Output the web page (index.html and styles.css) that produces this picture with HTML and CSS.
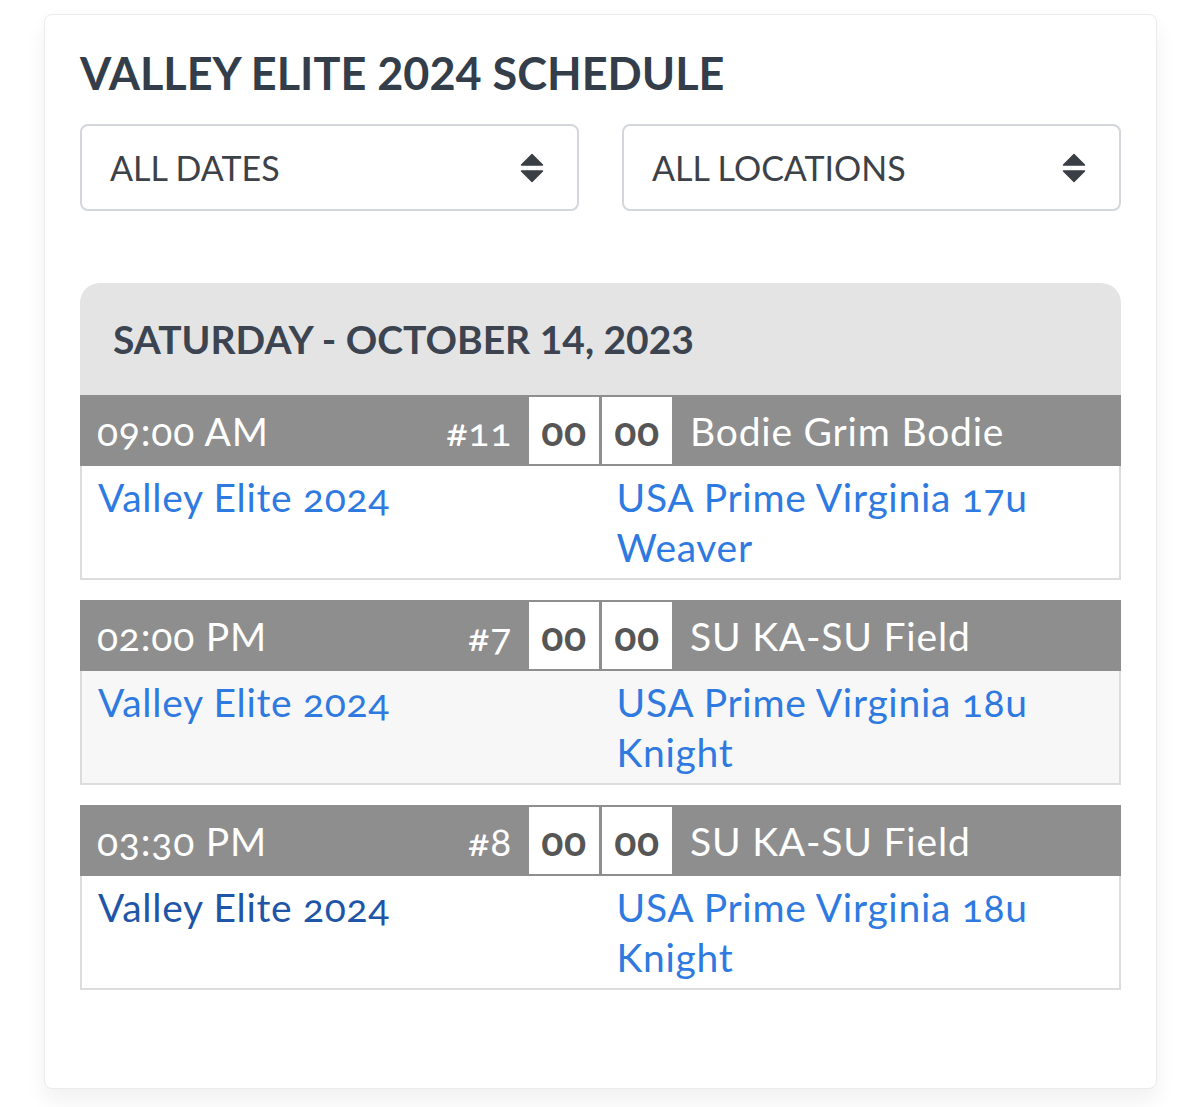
FILE: index.html
```html
<!DOCTYPE html>
<html lang="en">
<head>
<meta charset="utf-8">
<title>Valley Elite 2024 Schedule</title>
<link rel="stylesheet" href="styles.css">
</head>
<body>
<div class="page">
  <div class="card">
    <h1 class="title">VALLEY ELITE 2024 SCHEDULE</h1>
    <div class="filters">
      <div class="select">
        <span>ALL DATES</span>
        <svg class="sort" viewBox="0 0 24 30" aria-hidden="true"><polygon points="12,1.5 22.5,12 1.5,12"/><polygon points="1.5,18 22.5,18 12,28.5"/></svg>
      </div>
      <div class="select">
        <span>ALL LOCATIONS</span>
        <svg class="sort" viewBox="0 0 24 30" aria-hidden="true"><polygon points="12,1.5 22.5,12 1.5,12"/><polygon points="1.5,18 22.5,18 12,28.5"/></svg>
      </div>
    </div>

    <div class="day">
      <div class="day-head">SATURDAY - OCTOBER 14, 2023</div>

      <div class="game">
        <div class="bar">
          <div class="info"><span>09:00 AM</span><span>#11</span></div>
          <div class="score">00</div>
          <div class="score">00</div>
          <div class="loc">Bodie Grim Bodie</div>
        </div>
        <div class="teams">
          <a class="team">Valley Elite 2024</a>
          <a class="team">USA Prime Virginia 17u Weaver</a>
        </div>
      </div>

      <div class="game">
        <div class="bar">
          <div class="info"><span>02:00 PM</span><span>#7</span></div>
          <div class="score">00</div>
          <div class="score">00</div>
          <div class="loc">SU KA-SU Field</div>
        </div>
        <div class="teams alt">
          <a class="team">Valley Elite 2024</a>
          <a class="team">USA Prime Virginia 18u Knight</a>
        </div>
      </div>

      <div class="game">
        <div class="bar">
          <div class="info"><span>03:30 PM</span><span>#8</span></div>
          <div class="score">00</div>
          <div class="score">00</div>
          <div class="loc">SU KA-SU Field</div>
        </div>
        <div class="teams">
          <a class="team visited">Valley Elite 2024</a>
          <a class="team">USA Prime Virginia 18u Knight</a>
        </div>
      </div>
    </div>
  </div>
</div>
</body>
</html>
```
FILE: styles.css
```css
* { box-sizing: border-box; }

body {
  margin: 0;
  background: #ffffff;
  font-family: "Lato", "Liberation Sans", sans-serif;
}

.page {
  padding: 14px 43px 19px 44px;
}

.card {
  border: 1px solid #ebebeb;
  border-radius: 8px;
  background: #fff;
  box-shadow: 0 12px 22px rgba(0, 0, 0, 0.06);
  padding: 31px 35px 78px 35px;
}

.title {
  margin: 0;
  font-size: 45px;
  line-height: 1.2;
  font-weight: 700;
  color: #343e4a;
}

.filters {
  display: flex;
  gap: 43px;
  margin-top: 24px;
}

.select {
  flex: 1;
  height: 87px;
  border: 2px solid #d3d6da;
  border-radius: 8px;
  display: flex;
  align-items: center;
  justify-content: space-between;
  padding: 0 33px 0 28px;
  font-size: 34px;
  color: #3d4148;
}

.sort {
  width: 24px;
  height: 30px;
  fill: #3a3f45;
  stroke: #3a3f45;
  stroke-width: 1.5;
  stroke-linejoin: round;
}

.day {
  margin-top: 72px;
}

.day-head {
  height: 112px;
  background: #e4e4e4;
  border-radius: 20px 20px 0 0;
  display: flex;
  align-items: center;
  padding: 0 33px 0 33px;
  font-size: 39px;
  font-weight: 700;
  color: #3b4450;
}

.game {
  margin-bottom: 20px;
  font-variant-numeric: oldstyle-nums;
}

.bar {
  display: grid;
  grid-template-columns: 1fr 70px 70px 1fr;
  column-gap: 3px;
  padding: 2px 0;
  height: 71px;
  background: #8e8e8e;
  color: #ffffff;
  font-size: 39px;
  letter-spacing: 0.8px;
}

.info {
  display: flex;
  align-items: center;
  justify-content: space-between;
  padding: 0 14px 0 17px;
}

.score {
  background: #ffffff;
  color: #565656;
  font-weight: 700;
  font-size: 41px;
  letter-spacing: 0.5px;
  display: flex;
  align-items: center;
  justify-content: center;
}

.loc {
  display: flex;
  align-items: center;
  padding-left: 15px;
}

.teams {
  display: grid;
  grid-template-columns: 1fr 1fr;
  border: 2px solid #dcdcdc;
  border-top: none;
  background: #ffffff;
  padding: 6px 0 6px 0;
  font-size: 39px;
  letter-spacing: 0.7px;
  line-height: 50px;
}

.teams.alt {
  background: #f7f7f7;
}

.team {
  padding: 0 16px;
  color: #2f7ae0;
  text-decoration: none;
}

.team.visited {
  color: #1f55a6;
}
```
